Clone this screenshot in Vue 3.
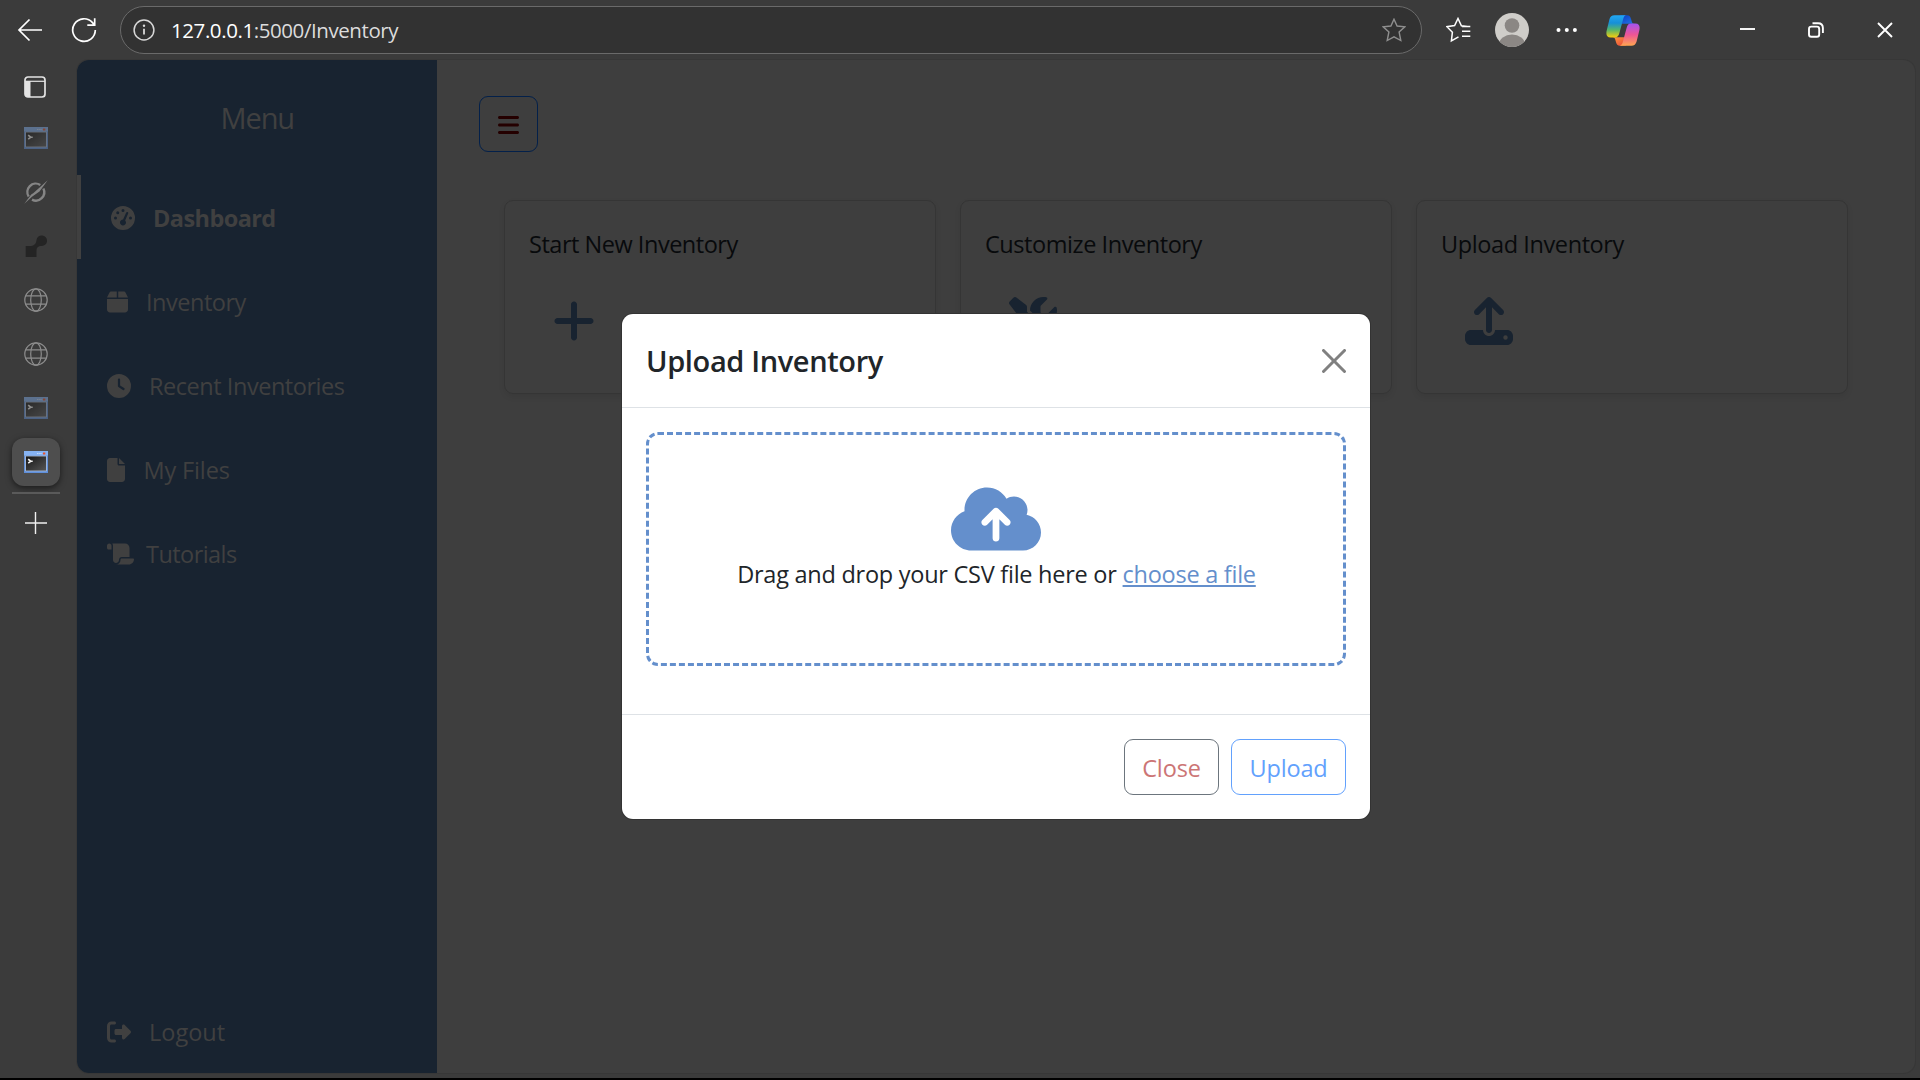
<script setup>
const nav = [
  { label: 'Dashboard', w: 512, active: true, ls: -0.58, gap: 18, d: 'M0 256a256 256 0 1 1 512 0A256 256 0 1 1 0 256zM288 96a32 32 0 1 0 -64 0 32 32 0 1 0 64 0zM256 416c35.3 0 64-28.7 64-64c0-17.4-6.9-33.1-18.1-44.6L366 161.7c5.3-12.1-.2-26.3-12.3-31.6s-26.3 .2-31.6 12.3L257.9 288c-.6 0-1.3 0-1.9 0c-35.3 0-64 28.7-64 64s28.7 64 64 64zM176 144a32 32 0 1 0 -64 0 32 32 0 1 0 64 0zM96 288a32 32 0 1 0 0-64 32 32 0 1 0 0 64zm352-32a32 32 0 1 0 -64 0 32 32 0 1 0 64 0z' },
  { label: 'Inventory', w: 448, ls: -0.48, gap: 18, d: 'M50.7 58.5L0 160H208V32H93.7C75.5 32 58.9 42.3 50.7 58.5zM240 160H448L397.3 58.5C389.1 42.3 372.5 32 354.3 32H240V160zm208 32H0V416c0 35.3 28.7 64 64 64H384c35.3 0 64-28.7 64-64V192z' },
  { label: 'Recent Inventories', w: 512, ls: -0.46, gap: 18, d: 'M256 0a256 256 0 1 1 0 512A256 256 0 1 1 256 0zM232 120V256c0 8 4 15.5 10.7 20l96 64c11 7.4 25.9 4.4 33.3-6.7s4.4-25.9-6.7-33.3L280 243.2V120c0-13.3-10.7-24-24-24s-24 10.7-24 24z' },
  { label: 'My Files', w: 384, ls: -0.14, gap: 18.5, d: 'M0 64C0 28.7 28.7 0 64 0H224V128c0 17.7 14.3 32 32 32H384V448c0 35.3-28.7 64-64 64H64c-35.3 0-64-28.7-64-64V64zm384 64H256V0L384 128z' },
  { label: 'Tutorials', w: 576, ls: -0.56, gap: 12, d: 'M0 80v48c0 17.7 14.3 32 32 32H48 96V80c0-26.5-21.5-48-48-48S0 53.5 0 80zM112 32c10 13.4 16 30 16 48V384c0 35.3 28.7 64 64 64s64-28.7 64-64v-5.3c0-32.4 26.3-58.7 58.7-58.7H480V128c0-53-43-96-96-96H112zM464 480c61.9 0 112-50.1 112-112c0-8.8-7.2-16-16-16H314.7c-14.7 0-26.7 11.9-26.7 26.7V384c0 53-43 96-96 96H368h96z' }
]
const cards = [
  { label: 'Start New Inventory', ls: -0.475, w: 448, d: 'M256 80c0-17.7-14.3-32-32-32s-32 14.3-32 32V224H48c-17.7 0-32 14.3-32 32s14.3 32 32 32H192V432c0 17.7 14.3 32 32 32s32-14.3 32-32V288H400c17.7 0 32-14.3 32-32s-14.3-32-32-32H256V80z' },
  { label: 'Customize Inventory', ls: -0.437, w: 512, d: 'M78.6 5C69.1-2.4 55.6-1.5 47 7L7 47c-8.5 8.5-9.4 22-2.1 31.6l80 104c4.5 5.9 11.6 9.4 19 9.4h54.1l109 109c-14.7 29-10 65.4 14.3 89.6l112 112c12.5 12.5 32.8 12.5 45.3 0l64-64c12.5-12.5 12.5-32.8 0-45.3l-112-112c-24.2-24.2-60.6-29-89.6-14.3l-109-109V104c0-7.5-3.5-14.5-9.4-19L78.6 5zM19.9 396.1C7.2 408.8 0 426.1 0 444.1C0 481.6 30.4 512 67.9 512c18 0 35.3-7.2 48-19.9L233.7 374.3c-7.8-20.9-9-43.6-3.6-65.1l-61.7-61.7L19.9 396.1zM512 144c0-10.5-1.1-20.7-3.2-30.5c-2.4-11.2-16.1-14.1-24.2-6l-63.9 63.9c-3 3-7.1 4.7-11.3 4.7H352c-8.8 0-16-7.2-16-16V102.6c0-4.2 1.7-8.3 4.7-11.3l63.9-63.9c8.1-8.1 5.2-21.8-6-24.2C388.7 1.1 378.5 0 368 0C288.5 0 224 64.5 224 144l0 .8 85.3 85.3c36-9.1 75.8 .5 104 28.7L429 274.5c49-23 83-72.8 83-130.5z' },
  { label: 'Upload Inventory', ls: -0.4, w: 512, d: 'M288 109.3V352c0 17.7-14.3 32-32 32s-32-14.3-32-32V109.3l-73.4 73.4c-12.5 12.5-32.8 12.5-45.3 0s-12.5-32.8 0-45.3l128-128c12.5-12.5 32.8-12.5 45.3 0l128 128c12.5 12.5 12.5 32.8 0 45.3s-32.8 12.5-45.3 0L288 109.3zM64 352H192c0 35.3 28.7 64 64 64s64-28.7 64-64H448c35.3 0 64 28.7 64 64v32c0 35.3-28.7 64-64 64H64c-35.3 0-64-28.7-64-64V416c0-35.3 28.7-64 64-64zM432 456a24 24 0 1 0 0-48 24 24 0 1 0 0 48z' }
]
const logout = 'M377.9 105.9L500.7 228.7c7.2 7.2 11.3 17.1 11.3 27.3s-4.1 20.1-11.3 27.3L377.9 406.1c-6.4 6.4-15 9.9-24 9.9c-18.7 0-33.9-15.2-33.9-33.9l0-62.1-128 0c-17.7 0-32-14.3-32-32l0-64c0-17.7 14.3-32 32-32l128 0 0-62.1c0-18.7 15.2-33.9 33.9-33.9c9 0 17.6 3.6 24 9.9zM160 96L96 96c-17.7 0-32 14.3-32 32l0 256c0 17.7 14.3 32 32 32l64 0c17.7 0 32 14.3 32 32s-14.3 32-32 32l-64 0c-53 0-96-43-96-96L0 128C0 75 43 32 96 32l64 0c17.7 0 32 14.3 32 32s-14.3 32-32 32z'
const tabs = ['term', 'slash', 'node', 'globe', 'globe', 'term', 'active']
</script>

<template>
  <div class="browser">
    <header class="toolbar">
      <svg class="back" width="26" height="24" viewBox="0 0 26 24"><path d="M25 12H2M12.5 1.5L2 12l10.5 10.5" /></svg>
      <svg class="reload" width="26" height="26" viewBox="0 0 26 26"><path d="M24.3 13A11.3 11.3 0 1 1 21.5 5.6L23.5 8M23.7 1.2V8.2H16.3" /></svg>
      <div class="address">
        <svg class="info" width="22" height="22" viewBox="0 0 22 22"><circle cx="11" cy="11" r="9.9" /><path d="M11 9.8v5.7" stroke-width="1.8" /><circle cx="11" cy="6.8" r="1.2" class="solid" /></svg>
        <span class="url"><b>127.0.0.1</b>:5000/Inventory</span>
        <svg class="fav" width="24" height="24" viewBox="0 0 24 24"><path d="M12 1.2l3.1 6.8 7.7.8-5.7 5.2 1.7 8.5L12 18.9l-6.800 3.600 1.700-8.500L1.200 8.800l7.700-.8z" /></svg>
      </div>
      <svg class="favs" width="25" height="26" viewBox="0 0 25 26"><path d="M21.5 9.6l-6.100-.8L12 1.500 8.600 8.600.9 9.700l5.500 5.500-1 8.600 7.100-4M16 9.600h8.300M16 14.300h8.300M16 19.300h8.300" /></svg>
      <svg class="avatar" width="34" height="34" viewBox="0 0 34 34"><defs><clipPath id="av"><circle cx="17" cy="17" r="17" /></clipPath></defs><g clip-path="url(#av)"><path fill="#cfcdc9" d="M0 0h34v34H0z" /><circle cx="17" cy="12.500" r="7.300" fill="#8b8784" /><ellipse cx="17" cy="31.500" rx="13" ry="10" fill="#8b8784" /></g></svg>
      <svg class="dots" width="22" height="6" viewBox="0 0 22 6"><circle cx="2.500" cy="3" r="2" /><circle cx="10.800" cy="3" r="2" /><circle cx="18.900" cy="3" r="2" /></svg>
      <svg class="copilot" width="34" height="31" viewBox="0 0 34 31">
        <defs>
          <linearGradient id="c1" x1="0" y1="0" x2="0" y2="1"><stop offset="0" stop-color="#22a7f2" /><stop offset=".35" stop-color="#168fd8" /><stop offset=".65" stop-color="#55b56c" /><stop offset="1" stop-color="#f5ce0c" /></linearGradient>
          <linearGradient id="c2" x1="0" y1="0" x2="0" y2="1"><stop offset="0" stop-color="#a553ee" /><stop offset=".5" stop-color="#ee5596" /><stop offset="1" stop-color="#ffa650" /></linearGradient>
          <linearGradient id="c3" x1="0" y1="0" x2="1" y2="1"><stop offset="0" stop-color="#0a3bc0" /><stop offset="1" stop-color="#2477e6" /></linearGradient>
          <linearGradient id="c4" x1="0" y1="0" x2="1" y2="1"><stop offset="0" stop-color="#ff9a3c" /><stop offset="1" stop-color="#e8433a" /></linearGradient>
        </defs>
        <path fill="url(#c3)" d="M14 .3h7c2.500 0 3.400 1.500 4.100 4l.8 2.700c.4 1.200 1.200 1.600 2.500 1.700H16z" />
        <path fill="url(#c4)" d="M20 30.700h-6c-2.500 0-3.400-1.500-4.100-4l-.8-2.700c-.4-1.200-1.200-1.600-2.500-1.700H18z" />
        <path fill="url(#c1)" d="M8.500.3H20.500c-1.800.2-2.700 1.400-3.300 3.600L13.400 18c-.8 3-2 4.400-4.400 4.400H4.700C.7 22.400-.2 19.600.7 15.600L3.400 4.500C4.200 1.700 5.800.3 8.500.3z" />
        <path fill="url(#c2)" d="M25.500 30.700H13.500c1.800-.2 2.700-1.400 3.300-3.600L20.600 13c.8-3 2-4.400 4.400-4.400h4.300c4 0 4.900 2.800 4 6.800l-2.700 11.100c-.8 2.800-2.400 4.200-5.100 4.200z" />
      </svg>
      <svg class="win min" width="15" height="16" viewBox="0 0 15 16"><path d="M0 8h15" /></svg>
      <svg class="win restore" width="16" height="16" viewBox="0 0 16 16"><rect x="1" y="4.600" width="10.200" height="10.200" rx="2.300" /><path d="M4.500 1.200H10c3.200 0 4.900 1.900 4.900 4.900v5" /></svg>
      <svg class="win close-win" width="16" height="16" viewBox="0 0 16 16"><path d="M1 1l14 14M15 1L1 15" /></svg>
    </header>

    <div class="body">
      <aside class="tabs">
        <div class="tab panel"><svg width="22" height="22" viewBox="0 0 22 22"><rect x="1" y="1" width="20" height="20" rx="3" fill="none" stroke="#e4e4e4" stroke-width="1.700" /><path d="M1 5.300h20" stroke="#e4e4e4" stroke-width="1.200" /><path d="M1 5h5.500v16H3.500L1 19z" fill="#e4e4e4" /></svg></div>
        <div v-for="(t, i) in tabs" :key="i" class="tab" :class="{ current: t === 'active' }">
          <svg v-if="t === 'term' || t === 'active'" :class="{ faded: t === 'term' }" width="24" height="22" viewBox="0 0 24 22">
            <defs><linearGradient id="scr" x1="0" y1="0" x2="1" y2="1"><stop offset="0" stop-color="#161616" /><stop offset="1" stop-color="#555" /></linearGradient></defs>
            <path fill="#5f8fda" d="M0 0h24v22H0z" /><path fill="#86b3f3" d="M0 0h24v4.500H0z" /><path fill="#b9c6da" d="M1.300 4.700h21.400v15.600H1.300z" /><path fill="url(#scr)" d="M2 5.400h20v14.200H2z" />
            <path d="M13 2.500h5" stroke="#c8dcf8" stroke-dasharray="1.500 .7" /><path fill="#e8542c" d="M19 1.500h2.300v2H19z" />
            <path d="M4.200 8.200L6.800 10.300 4.200 12.200M7 10.300H8.700" fill="none" stroke="#f2f2f2" stroke-width="1.600" />
          </svg>
          <svg v-else-if="t === 'slash'" width="24" height="24" viewBox="0 0 24 24" fill="none" stroke="#858585"><path stroke-width="2.400" d="M4.700 16.500A8.400 8.400 0 0 1 16.300 4.900M19.400 8.500A8.400 8.400 0 0 1 8 19.600" /><path fill="#858585" stroke="none" d="M23.700.3L15.500 11.500 8.300 16.500 .3 23.700 7.200 14.500 9.500 13z" /></svg>
          <svg v-else-if="t === 'node'" width="22" height="22" viewBox="0 0 22 22" fill="#242424"><path d="M1 11h3.500C9 11 11 9 11.500 5a5.300 5.300 0 1 1 5.300 6c-4 0-5.300 1.500-5.300 5v6H.7V11z" /></svg>
          <svg v-else width="24" height="24" viewBox="0 0 24 24" fill="none" stroke="#8d8d8d" stroke-width="1.200"><circle cx="12" cy="12" r="11.200" /><ellipse cx="12" cy="12" rx="5.300" ry="11.200" /><path d="M2 7.800h20M2 16.200h20" /></svg>
        </div>
        <div class="rule"></div>
        <svg class="plus" width="22" height="22" viewBox="0 0 22 22"><path d="M10.500 0v22M0 11h22" stroke="#f0f0f0" stroke-width="1.400" /></svg>
      </aside>

      <div class="page">
        <nav class="sidebar">
          <h2>Menu</h2>
          <a v-for="n in nav" :key="n.label" class="item" :class="{ on: n.active }" :style="{ letterSpacing: n.ls + 'px', gap: n.gap + 'px' }">
            <svg :width="n.w * 24 / 512" height="24" :viewBox="`0 0 ${n.w} 512`"><path :d="n.d" fill-rule="evenodd" /></svg>{{ n.label }}
          </a>
          <a class="item logout"><svg width="24" height="24" viewBox="0 0 512 512"><path :d="logout" /></svg>Logout</a>
        </nav>
        <main>
          <button class="burger"><svg width="21" height="24" viewBox="0 0 448 512"><path d="M0 96C0 78.300 14.300 64 32 64H416c17.700 0 32 14.300 32 32s-14.300 32-32 32H32C14.300 128 0 113.700 0 96zM0 256c0-17.700 14.300-32 32-32H416c17.700 0 32 14.300 32 32s-14.300 32-32 32H32c-17.700 0-32-14.300-32-32zM448 416c0 17.700-14.300 32-32 32H32c-17.700 0-32-14.300-32-32s14.300-32 32-32H416c17.700 0 32 14.300 32 32z" /></svg></button>
          <section class="cards">
            <article v-for="c in cards" :key="c.label" class="card">
              <h3 :style="{ letterSpacing: c.ls + 'px' }">{{ c.label }}</h3>
              <svg :width="c.w * 48 / 512" height="48" :viewBox="`0 0 ${c.w} 512`"><path :d="c.d" fill-rule="evenodd" /></svg>
            </article>
          </section>
        </main>
      </div>
    </div>
    <div class="taskline"></div>

    <div class="modal">
      <header class="m-head">
        <h1>Upload Inventory</h1>
        <svg width="24" height="24" viewBox="0 0 16 16"><path d="M.293.293a1 1 0 0 1 1.414 0L8 6.586 14.293.293a1 1 0 1 1 1.414 1.414L9.414 8l6.293 6.293a1 1 0 0 1-1.414 1.414L8 9.414l-6.293 6.293a1 1 0 0 1-1.414-1.414L6.586 8 .293 1.707a1 1 0 0 1 0-1.414z" /></svg>
      </header>
      <div class="m-body">
        <div class="drop">
          <svg width="90" height="72" viewBox="0 0 640 512"><path d="M144 480C64.500 480 0 415.500 0 336c0-62.800 40.200-116.200 96.200-135.900c-.1-2.700-.2-5.400-.2-8.100c0-88.400 71.600-160 160-160c59.300 0 111 32.200 138.700 80.200C409.900 102 428.300 96 448 96c53 0 96 43 96 96c0 12.200-2.300 23.800-6.400 34.600C596 238.400 640 290.100 640 352c0 70.700-57.300 128-128 128H144zm79-217c-9.400 9.400-9.400 24.600 0 33.900s24.600 9.400 33.900 0l39-39V392c0 13.300 10.700 24 24 24s24-10.700 24-24V257.900l39 39c9.400 9.400 24.600 9.400 33.900 0s9.400-24.600 0-33.900l-80-80c-9.400-9.400-24.600-9.400-33.900 0l-80 80z" /></svg>
          <p><span>Drag and drop your CSV file here or</span><a>choose a file</a></p>
        </div>
      </div>
      <footer class="m-foot">
        <button class="btn close">Close</button>
        <button class="btn upload">Upload</button>
      </footer>
    </div>
  </div>
</template>

<style>
body { background: #3b3b3b; }
</style>
<style scoped>
* { box-sizing: border-box; margin: 0; }
svg { display: block; flex: none; }
h1, h2, h3 { font-weight: 400; white-space: nowrap; }
button { font: inherit; background: none; padding: 0; }
.browser { width: 1920px; height: 1080px; position: relative; overflow: hidden; display: flex; flex-direction: column; background: #3b3b3b; font-family: "Open Sans", "Noto Sans", sans-serif; font-size: 23.5px; }
.toolbar { height: 60px; flex: none; display: flex; align-items: center; padding-left: 17px; fill: none; stroke: #fff; stroke-width: 1.7; }
.back { margin-top: -1px; }
.reload { margin-left: 28px; }
.address { width: 1302px; height: 48px; margin-left: 23px; border: 1.5px solid #6a6a6a; border-radius: 24px; background: #323232; display: flex; align-items: center; padding: 0 15px 0 12px; }
.info { stroke: #d8d8d8; stroke-width: 1.5; }
.solid { fill: #d8d8d8; stroke: none; }
.url { margin-left: 16px; font-size: 20.5px; letter-spacing: -0.42px; color: #dcdcdc; line-height: 44px; }
.url b { font-weight: 400; color: #fff; }
.fav { margin-left: auto; stroke: #8f8f8f; stroke-width: 1.4; }
.favs { margin-left: 24px; stroke-width: 1.5; }
.avatar { margin-left: 24px; stroke: none; }
.dots { margin-left: 27px; fill: #fff; stroke: none; }
.copilot { margin-left: 28px; stroke: none; }
.win { stroke-width: 1.9; }
.min { margin-left: 100px; margin-top: -2px; }
.restore { margin-left: 53px; }
.close-win { margin-left: 53px; }
.body { flex: 1; display: flex; min-height: 0; }
.tabs { width: 77px; flex: none; padding-left: 12px; }
.tab { width: 48px; height: 48px; margin-bottom: 6px; display: flex; align-items: center; justify-content: center; border-radius: 12px; }
.panel { padding-right: 2px; margin: 3px 0 3px; }
.current { background: #4e4e4e; box-shadow: 0 2px 6px rgba(0, 0, 0, .55); }
.faded { opacity: .45; }
.rule { height: 2px; width: 48px; background: #5a5a5a; }
.plus { margin: 18px 0 0 12.5px; }
.page { width: 1838px; height: 1013px; display: flex; background: #3e3e3e; border-radius: 12px; overflow: hidden; box-shadow: 0 0 0 1px #373737; }
.sidebar { width: 360px; flex: none; background: #182330; color: #404040; fill: #404040; display: flex; flex-direction: column; }
.sidebar h2 { font-size: 29px; line-height: 40px; margin: 38px 0 37px; padding-left: 143.5px; letter-spacing: -1.1px; }
.item { height: 84px; display: flex; align-items: center; padding: 2px 0 0 30px; white-space: nowrap; }
.on { border-left: 4px solid #404040; font-weight: 700; }
.logout { margin-top: auto; margin-bottom: 0; gap: 18px; }
main { flex: 1; padding: 36px 66px 0 42px; }
.burger { width: 59px; height: 56px; border: 1px solid #03204a; border-radius: 9px; display: flex; align-items: center; justify-content: center; padding-top: 2px; fill: #240000; }
.cards { display: flex; gap: 24px; margin: 48px 0 0 25px; }
.card { width: 432px; height: 194px; flex: none; border: 1px solid #353535; border-radius: 9px; box-shadow: 0 3px 6px rgba(0, 0, 0, .07); padding: 25px 24px; color: #080a0c; fill: #182330; }
.card h3 { font-size: 23.5px; line-height: 36px; }
.card svg { margin: 35px 0 0 24px; }
.taskline { height: 2px; background: #000; flex: none; }
.modal { position: absolute; left: 622px; top: 314px; width: 748px; height: 505px; background: #fff; border-radius: 11px; color: #212529; display: flex; flex-direction: column; box-shadow: 0 0 0 1px #333; }
.m-head { height: 94px; border-bottom: 1px solid #dee2e6; display: flex; align-items: center; justify-content: space-between; padding: 0 24px; }
.m-head h1 { font-size: 29px; font-weight: 600; letter-spacing: -0.37px; line-height: 44px; }
.m-head svg { fill: #808080; }
.m-body { flex: 1; padding: 24px; }
.drop { height: 234px; border: 3px dashed #648fcc; border-radius: 12px; display: flex; flex-direction: column; align-items: center; padding-top: 48px; fill: #648fcc; }
.drop p { display: flex; gap: 6px; line-height: 36px; margin-top: 1px; padding-left: 1px; letter-spacing: -0.255px; white-space: nowrap; }
.drop a { color: #648fcc; text-decoration: underline; text-decoration-thickness: 2px; text-underline-offset: 2px; letter-spacing: -0.26px; }
.m-foot { height: 105px; border-top: 1px solid #dee2e6; display: flex; gap: 12px; justify-content: flex-end; padding: 24px 24px 0 0; }
.btn { height: 56px; border: 1px solid; border-radius: 9px; padding-top: 2px; letter-spacing: -0.14px; }
.close { width: 95px; color: #cc7575; border-color: #6c757d; }
.upload { width: 115px; color: #62a1fd; border-color: #62a1fd; }
</style>
